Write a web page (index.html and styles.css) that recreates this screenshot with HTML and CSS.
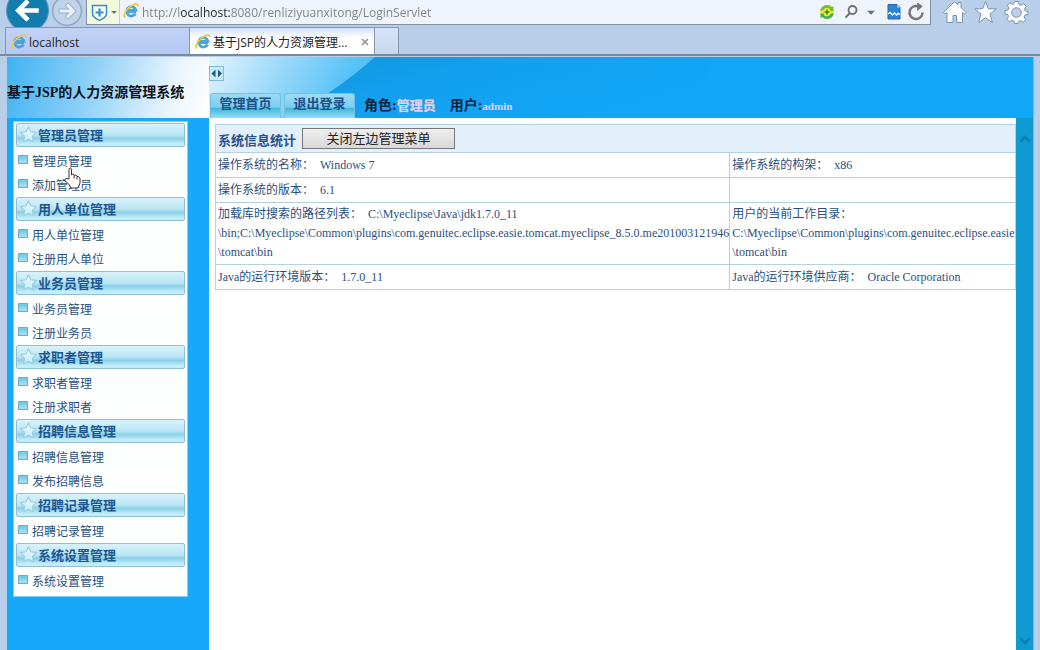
FILE: index.html
```html
<!DOCTYPE html>
<html lang="zh-CN">
<head>
<meta charset="utf-8">
<title>基于JSP的人力资源管理系统</title>
<link rel="stylesheet" href="styles.css">
</head>
<body>
<svg class="defs" aria-hidden="true">
  <defs>
    <linearGradient id="gold" x1="0" y1="0" x2="1" y2="1"><stop offset="0" stop-color="#f5d84a"/><stop offset="1" stop-color="#d9b530"/></linearGradient>
    <linearGradient id="fade" x1="0" y1="0" x2="1" y2="0.5"><stop offset="0" stop-color="#1294da"/><stop offset="0.4" stop-color="#12a0ee"/><stop offset="1" stop-color="#12a6f7"/></linearGradient>
    <linearGradient id="starfill" x1="0" y1="0" x2="0" y2="1"><stop offset="0" stop-color="#e9faff"/><stop offset="1" stop-color="#c5ecf8"/></linearGradient>
    <symbol id="ie" viewBox="0 0 16 16">
      <path d="M12.500 10.500a4.700 4.700 0 1 1 .4-3.200H4.500M3.800 8.600h9.200" fill="none" stroke="#4aa5de" stroke-width="2.800"/>
      <path d="M2.200 14.500C-.3 13.200 2 8 6.500 4.200 10.500 .9 15.300-.5 14.800 3.200" fill="none" stroke="url(#gold)" stroke-width="1.700"/>
    </symbol>
    <symbol id="star" viewBox="0 0 16 16">
      <path d="M8 1l2.300 4.500 5 .7-3.600 3.500.9 5L8 12.400l-4.600 2.300.9-5L.7 6.200l5-.7z" fill="url(#starfill)" stroke="#9bcbdc" stroke-linejoin="round"/>
    </symbol>
  </defs>
</svg>

<header class="browser">
  <div class="toolbar">
    <button class="nav back" aria-label="后退"><svg viewBox="0 0 42 42"><circle cx="21" cy="21" r="20.500" fill="#127dae" stroke="#5c93bb"/><path d="M32 21H13M21.500 11.500L12 21l9.500 9.500" fill="none" stroke="#fff" stroke-width="4.500"/></svg></button>
    <button class="nav forward" aria-label="前进"><svg viewBox="0 0 30 30"><circle cx="15" cy="15" r="13.500" fill="#c1d3ea" stroke="#98a9c2" stroke-width="1.500"/><path d="M7 15h13.500M14.500 8.500l6.500 6.500-6.500 6.500" fill="none" stroke="#9badc8" stroke-width="4.500"/><path d="M8 15h12M15 9l6 6-6 6" fill="none" stroke="#eaf1fa" stroke-width="2.800"/></svg></button>
    <div class="address">
      <button class="shield" aria-label="安全"><svg viewBox="0 0 28 18"><path d="M1.500 1.500h14v8c0 4-4 5.500-7 6.800-3-1.300-7-2.800-7-6.800z" fill="#f3fbff" stroke="#3f8cc4" stroke-width="1.500"/><path d="M8.500 4.500v8M4.500 8.500h8" stroke="#3f8cc4" stroke-width="2.200"/><path d="M20 7h6l-3 3z" fill="#66737a"/></svg></button>
      <svg class="ie"><use href="#ie"/></svg>
      <input class="url" type="text" aria-label="地址" value="http://localhost:8080/renliziyuanxitong/LoginServlet">
      <button class="tool" aria-label="加速"><svg viewBox="0 0 16 16"><circle cx="8" cy="8" r="6.800" fill="#e9e62e"/><path d="M1.200 6.500A7 7 0 0 1 13 3l1.500-1v5H9.500l1.700-1.800A4.500 4.500 0 0 0 4 6.500z" fill="#6cc136"/><path d="M14.800 9.500A7 7 0 0 1 3 13l-1.500 1V9.500H6l-1.200 1.700A4.500 4.500 0 0 0 12 9.500z" fill="#3fb04a"/><circle cx="8" cy="8" r="3.600" fill="#f4ea2a"/><path d="M8 5.500v5M5.500 8h5" stroke="#298c38" stroke-width="1.500"/></svg></button>
      <button class="tool find" aria-label="搜索"><svg viewBox="0 0 16 16"><circle cx="9.500" cy="6" r="4" fill="none" stroke="#6e6e72" stroke-width="1.800"/><path d="M7 9l-4.500 4.500" stroke="#6e6e72" stroke-width="2"/></svg></button>
      <button class="tool caret" aria-label="搜索选项"><svg viewBox="0 0 16 16"><path d="M3.500 6.500h9L8 11z" fill="#6e6e72"/></svg></button>
      <button class="tool" aria-label="兼容性视图"><svg viewBox="0 0 16 16"><path d="M2 .5h9l3 3v11.500H2z" fill="#2c83d0" stroke="#2468b0"/><path d="M11 .5v3h3z" fill="#9fd0f5"/><path d="M2 10l2-1.500L6.500 11l2-2 2 2 1.500-1.500 2 1" fill="none" stroke="#eff3fb" stroke-width="1.500"/></svg></button>
      <button class="tool reload" aria-label="刷新"><svg viewBox="0 0 16 16"><path d="M13.800 8.500A5.800 5.800 0 1 1 10 3" fill="none" stroke="#77777b" stroke-width="2.200"/><path d="M9-1l5 4.200-5 3.800z" fill="#77777b"/></svg></button>
    </div>
    <nav class="shortcuts">
      <button aria-label="主页"><svg viewBox="0 0 24 24"><path d="M12 1.500L1 12.500l1.500 1.500L4.500 12.500V22.500h6v-7h3.500v7h6V12.500l2 1.500 1.500-1.500-5-5v-5h-3v2.500z" fill="#fff" stroke="#7c92b0"/></svg></button>
      <button aria-label="收藏夹"><svg viewBox="0 0 24 24"><path d="M12 1.500l2.800 7.200 8 .3-6.300 5 2.300 8.500L12 17.800 5.200 22.500 7.500 14 1.200 9l8-.3z" fill="#fff" stroke="#7c92b0"/></svg></button>
      <button aria-label="工具"><svg viewBox="0 0 24 24"><path d="M10 1.500h4l.5 3 2 1 2.600-1.800 2.700 2.700L20 9l.8 2 2.700.5v3l-3 .5-1 2 1.800 2.600-2.700 2.700L16 20.500l-2 1-.5 2h-3.500l-.5-2.500-2-1-2.600 1.800L2.200 19 4 16.500l-.8-2L.5 14v-3.500l3-.5 1-2-1.800-2.600L5.400 2.700 8 4.500l1.500-.8z" fill="#fff" stroke="#7c92b0"/><circle cx="12" cy="12.500" r="4.800" fill="#bccfe8" stroke="#7c92b0"/></svg></button>
    </nav>
  </div>
  <div class="tabs">
    <a class="tab" href="#local"><svg class="ie"><use href="#ie"/></svg><span>localhost</span></a>
    <div class="tab current"><svg class="ie"><use href="#ie"/></svg><span>基于JSP的人力资源管理...</span><button class="close" aria-label="关闭"><svg viewBox="0 0 8 8"><path d="M1 1l6 6M7 1L1 7" stroke="#96969c" stroke-width="1.700"/></svg></button></div>
    <button class="newtab" aria-label="新建标签页"></button>
  </div>
</header>

<div class="viewport">
  <aside class="side">
    <h1 class="brand">基于JSP的人力资源管理系统</h1>
    <nav class="menu">
      <section><h2><svg><use href="#star"/></svg>管理员管理</h2>
        <a href="#a1">管理员管理</a><a href="#a2">添加管理员</a></section>
      <section><h2><svg><use href="#star"/></svg>用人单位管理</h2>
        <a href="#b1">用人单位管理</a><a href="#b2">注册用人单位</a></section>
      <section><h2><svg><use href="#star"/></svg>业务员管理</h2>
        <a href="#c1">业务员管理</a><a href="#c2">注册业务员</a></section>
      <section><h2><svg><use href="#star"/></svg>求职者管理</h2>
        <a href="#d1">求职者管理</a><a href="#d2">注册求职者</a></section>
      <section><h2><svg><use href="#star"/></svg>招聘信息管理</h2>
        <a href="#e1">招聘信息管理</a><a href="#e2">发布招聘信息</a></section>
      <section><h2><svg><use href="#star"/></svg>招聘记录管理</h2>
        <a href="#f1">招聘记录管理</a></section>
      <section><h2><svg><use href="#star"/></svg>系统设置管理</h2>
        <a href="#g1">系统设置管理</a></section>
    </nav>
  </aside>

  <div class="main">
    <div class="banner">
      <svg class="swoosh" viewBox="0 0 824 61" preserveAspectRatio="xMinYMin slice" aria-hidden="true"><path d="M166 0Q146 18 118 37L90 61H500V0z" fill="url(#fade)"/></svg>
      <button class="toggle" aria-label="切换菜单"><svg viewBox="0 0 13 13"><path d="M5.500 2.500v8L1.500 6.500zM8 2.500v8l4-4z" fill="#1b5a8c"/></svg></button>
      <div class="links">
        <a class="pill" href="#home">管理首页</a>
        <a class="pill" href="#logout">退出登录</a>
        <p class="who"><span>角色:<b class="role">管理员</b></span><span>用户:<b>admin</b></span></p>
      </div>
    </div>
    <div class="body">
      <main class="content">
        <table class="info">
          <thead>
            <tr><th colspan="2"><div class="title"><span>系统信息统计</span><button class="shut">关闭左边管理菜单</button></div></th></tr>
          </thead>
          <tbody>
            <tr><td>操作系统的名称： &nbsp;Windows 7</td><td>操作系统的构架： &nbsp;x86</td></tr>
            <tr><td>操作系统的版本： &nbsp;6.1</td><td></td></tr>
            <tr><td>加载库时搜索的路径列表： &nbsp;C:\Myeclipse\Java\jdk1.7.0_11<br>\bin;C:\Myeclipse\Common\plugins\com.genuitec.eclipse.easie.tomcat.myeclipse_8.5.0.me201003121946<br>\tomcat\bin</td><td>用户的当前工作目录：<br>C:\Myeclipse\Common\plugins\com.genuitec.eclipse.easie<br>\tomcat\bin</td></tr>
            <tr><td>Java的运行环境版本： &nbsp;1.7.0_11</td><td>Java的运行环境供应商： &nbsp;Oracle Corporation</td></tr>
          </tbody>
        </table>
      </main>
      <div class="scroll">
        <svg viewBox="0 0 12 8"><path d="M1.500 6.500L6 2l4.500 4.500" fill="none" stroke="#0c7cb4" stroke-width="2.500"/></svg>
        <svg viewBox="0 0 12 8"><path d="M1.500 1.500L6 6l4.500-4.500" fill="none" stroke="#0c7cb4" stroke-width="2.500"/></svg>
      </div>
    </div>
  </div>
</div>

<svg class="pointer" viewBox="0 0 17 22" aria-hidden="true"><path d="M5 12V2.500Q5 1 6.200 1T7.500 2.500V8l1-.8 1.500.3.5 1 1.500-.5 1 1.500h1.500L16 11v5l-2 5H7L5 17.500 1 13.500q-.5-2 1.500-2z" fill="#fff" stroke="#333"/><path d="M10 8.500v3M13 9.500v3" stroke="#333"/></svg>
</body>
</html>
```

FILE: styles.css
```css
* { box-sizing: border-box; }
body {
  margin: 0;
  height: 100vh;
  display: flex;
  flex-direction: column;
  overflow: hidden;
  background: #b9cee8;
  font-family: "Liberation Serif", "Noto Sans CJK SC", serif;
  font-size: 12px;
  color: #2b4f7d;
}
button { padding: 0; border: 0; background: none; font: inherit; color: inherit; }
a { color: inherit; text-decoration: none; }
svg { display: block; flex: none; }
.defs { position: absolute; width: 0; height: 0; }

/* browser frame */
.browser { flex: none; font-family: "Open Sans", "Noto Sans CJK SC", sans-serif; color: #222; }
.toolbar { display: flex; height: 27px; padding-left: 6px; align-items: flex-start; }
.nav { flex: none; }
.back { width: 43px; margin-top: -11px; }
.forward { width: 32px; margin-top: -5px; margin-left: 2px; }
.address {
  flex: 1;
  display: flex;
  align-items: center;
  height: 25px;
  margin-left: 3px;
  padding-right: 5px;
  background: #eff3fb;
  border: solid #8190a3;
  border-width: 0 1px 1px;
}
.shield { align-self: stretch; width: 33px; padding: 1px 0 0 4px; background: #f1fadc; border-right: 1px solid #c8d2c4; }
.shield svg { width: 28px; height: 18px; }
.ie { width: 16px; height: 16px; }
.address .ie { margin: 0 3px 2px; }
.url {
  flex: 1;
  min-width: 0;
  height: 24px;
  padding: 1px 0 0;
  border: 0;
  outline: 0;
  font: 12px "Open Sans", sans-serif;
  color: #7d8087;
  background: linear-gradient(90deg, #7d8087 38px, #222 38px, #222 89px, #7d8087 89px);
  -webkit-background-clip: text;
  background-clip: text;
  -webkit-text-fill-color: transparent;
}
.tool { width: 16px; margin-left: 5px; }
.find { margin-left: 8px; }
.caret { width: 14px; }
.caret + .tool { margin-left: 8px; }
.reload { width: 18px; }
.shortcuts { display: flex; gap: 6px; padding: 0 11px; }
.shortcuts svg { width: 25px; height: 24px; }
.tabs { display: flex; height: 29px; margin-bottom: 1px; padding-left: 5px; border-bottom: 2px solid #78899f; }
.tab {
  display: flex;
  align-items: center;
  gap: 2px;
  width: 185px;
  padding: 2px 0 0 5px;
  border: solid #8796ac;
  border-width: 1px 1px 0;
  background: linear-gradient(#c3d2f5, #b4c9f3);
}
.tab.current { border-left: 0; background: linear-gradient(#d5e1fc, #fff 40%); }
.close { width: 8px; margin-left: auto; margin-right: 5px; }
.newtab { width: 24px; border: solid #8796ac; border-width: 1px 1px 0 0; background: linear-gradient(#d8e4f8, #c6d8f0); }

/* page area */
.viewport { flex: 1; min-height: 0; display: flex; margin: 0 6px 0 7px; background: #17a8fa; border-right: 1px solid #8fb1d0; }
.side { flex: none; width: 202px; }
.brand {
  display: flex;
  align-items: center;
  height: 61px;
  margin: 0;
  padding-top: 7px;
  font-size: 14px;
  color: #0c1420;
  white-space: nowrap;
  background: linear-gradient(105deg, #3fb3f3, #8dd0f8 40%, #e9f5fd 80%, #fff);
}
.menu { width: 175px; margin: 3px 0 0 6px; padding: 1px 2px 3px; background: #fdffff; border: 1px solid #7fd0fa; }
.menu h2 {
  display: flex;
  align-items: center;
  gap: 1px;
  height: 24px;
  margin: 0 0 1px;
  padding: 0 0 1px 3px;
  border: 1px solid #8fc0d6;
  border-radius: 2px;
  background: linear-gradient(#d9f2fb, #b9e6f6 50%, #8ad0e8 65%, #c4edf9 90%);
  font-size: 13px;
  color: #1d5590;
}
.menu section { padding-bottom: 1px; }
.menu h2 svg { width: 17px; height: 17px; }
.menu a { display: flex; align-items: center; gap: 4px; height: 24px; padding: 2px 0 0 2px; }
.menu a::before { content: ""; width: 10px; height: 9px; margin-bottom: 3px; box-sizing: border-box; border: 1px solid #6aaec8; background: linear-gradient(#6cc7e6, #a9e2f3); }

.main { flex: 1; min-width: 0; display: flex; flex-direction: column; }
.banner {
  flex: none;
  position: relative;
  height: 61px;
  padding-top: 9px;
  overflow: hidden;
  background: linear-gradient(115deg, #e2f4fd 0, #a4dcfa 60px, #5cc4f7 130px, #1fabf5 220px, #12a6f7 400px);
}
.swoosh { position: absolute; inset: 0; width: 100%; height: 61px; }
.toggle { position: relative; display: block; width: 15px; height: 15px; border: 1px solid #80b8dc; background: #c8eafb; }
.links { position: relative; display: flex; gap: 3px; padding: 12px 0 0 1px; }
.pill {
  width: 71px;
  height: 25px;
  line-height: 20px;
  text-align: center;
  border: 1px solid #74c0e4;
  border-bottom: 0;
  border-radius: 3px 3px 0 0;
  background: linear-gradient(#9bdcf5, #7ccdef 55%, #45b6dc 60%, #8fe0f4);
  font-size: 13px;
  font-weight: bold;
  color: #1b4f86;
}
.who { display: flex; gap: 14px; margin: 0 0 0 6px; line-height: 25px; font-size: 14px; font-weight: bold; color: #0d2340; white-space: nowrap; }
.who b { font-size: 11px; color: #e4cdec; }
.who .role { font-size: 13px; }
.body { flex: 1; min-height: 0; display: flex; }
.content { flex: 1; min-width: 0; overflow: hidden; padding: 6px 0 0 6px; background: #fff; }
.scroll { flex: none; display: flex; flex-direction: column; justify-content: space-between; align-items: center; width: 17px; padding: 17px 0 5px; background: #0f9bd2; }
.scroll svg { width: 12px; height: 8px; }

.info { border-collapse: collapse; white-space: nowrap; }
.info th, .info td { border: 1px solid #b5d0e4; text-align: left; }
.info th { height: 28px; padding: 0 3px 0 2px; background: #e3effa; font-size: 13px; color: #2a5288; }
.info td { padding: 2px 0 2px 2px; line-height: 19px; height: 25px; }
.title { display: flex; align-items: center; gap: 6px; }
.title span { padding-top: 2px; }
.shut { width: 153px; height: 21px; border: 1px solid #777; background: linear-gradient(#eee, #d9d9d9); font-size: 13px; font-weight: normal; line-height: 17px; color: #222; }

.pointer { position: absolute; left: 64px; top: 167px; width: 17px; height: 22px; }
```
